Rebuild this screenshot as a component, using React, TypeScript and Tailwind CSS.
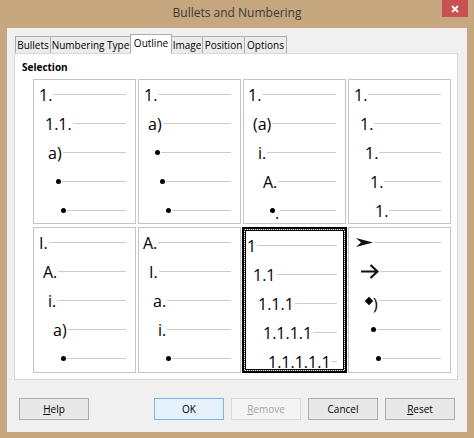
import React from 'react';

type Item = { pl: string; label: React.ReactNode };

const Dot = () => <span className="inline-block w-[5px] h-[5px] rounded-full bg-black" />;

const Arrowhead = () => (
  <svg width="17" height="9" viewBox="0 0 17 9" className="block">
    <path d="M0 0 L17 4.5 L0 9 L5 4.5 Z" fill="#111" />
  </svg>
);

const Arrow = () => (
  <svg width="19" height="15" viewBox="0 0 19 15" className="block">
    <path d="M1 7.5 H17.5 M10.5 1 L17.5 7.5 L10.5 14" stroke="#111" strokeWidth="2.2" fill="none" />
  </svg>
);

const Diamond = () => (
  <span className="flex items-center">
    <span className="inline-block w-[6px] h-[6px] rotate-45 bg-black" />
    <span className="ml-[1px] mt-[6px]">)</span>
  </span>
);

// preview cells, left to right, top to bottom
const cells: Item[][] = [
  [
    { pl: 'pl-[5px]', label: '1.' },
    { pl: 'pl-[11px]', label: '1.1.' },
    { pl: 'pl-[14px]', label: 'a)' },
    { pl: 'pl-[22px]', label: <Dot /> },
    { pl: 'pl-[27px]', label: <Dot /> },
  ],
  [
    { pl: 'pl-[5px]', label: '1.' },
    { pl: 'pl-[9px]', label: 'a)' },
    { pl: 'pl-[16px]', label: <Dot /> },
    { pl: 'pl-[21px]', label: <Dot /> },
    { pl: 'pl-[27px]', label: <Dot /> },
  ],
  [
    { pl: 'pl-[4px]', label: '1.' },
    { pl: 'pl-[9px]', label: '(a)' },
    { pl: 'pl-[14px]', label: 'i.' },
    { pl: 'pl-[19px]', label: 'A.' },
    {
      pl: 'pl-[26px]',
      label: (
        <span className="flex items-center">
          <Dot />
          <span className="mt-[4px]">.</span>
        </span>
      ),
    },
  ],
  [
    { pl: 'pl-[5px]', label: '1.' },
    { pl: 'pl-[11px]', label: '1.' },
    { pl: 'pl-[16px]', label: '1.' },
    { pl: 'pl-[21px]', label: '1.' },
    { pl: 'pl-[26px]', label: '1.' },
  ],
  [
    { pl: 'pl-[5px]', label: 'I.' },
    { pl: 'pl-[9px]', label: 'A.' },
    { pl: 'pl-[14px]', label: 'i.' },
    { pl: 'pl-[19px]', label: 'a)' },
    { pl: 'pl-[27px]', label: <Dot /> },
  ],
  [
    { pl: 'pl-[4px]', label: 'A.' },
    { pl: 'pl-[10px]', label: 'I.' },
    { pl: 'pl-[14px]', label: 'a.' },
    { pl: 'pl-[19px]', label: 'i.' },
    { pl: 'pl-[27px]', label: <Dot /> },
  ],
  [
    { pl: 'pl-[1px]', label: '1' },
    { pl: 'pl-[7px]', label: '1.1' },
    { pl: 'pl-[12px]', label: '1.1.1' },
    { pl: 'pl-[17px]', label: '1.1.1.1' },
    { pl: 'pl-[22px]', label: '1.1.1.1.1' },
  ],
  [
    { pl: 'pl-[7px]', label: <Arrowhead /> },
    { pl: 'pl-[11px]', label: <Arrow /> },
    { pl: 'pl-[17px]', label: <Diamond /> },
    { pl: 'pl-[22px]', label: <Dot /> },
    { pl: 'pl-[27px]', label: <Dot /> },
  ],
];

function Rows({ items, selected }: { items: Item[]; selected?: boolean }) {
  return (
    <div className={selected ? 'pr-[6px]' : 'pr-[9px]'}>
      {items.map((it, i) => (
        <div key={i} className={`flex items-center h-[29px] ${it.pl}`}>
          <span className="flex items-center text-[16px] leading-none text-black">{it.label}</span>
          <span className="flex-1 h-px bg-[#cccccc] ml-[1px]" />
        </div>
      ))}
    </div>
  );
}

function Button({ children, variant }: { children: React.ReactNode; variant?: 'default' | 'disabled' }) {
  const look =
    variant === 'default'
      ? 'bg-[#e5f1fb] border-[#7eb4ea] text-black'
      : variant === 'disabled'
        ? 'bg-[#f4f4f4] border-[#d9d9d9] text-[#a3a3a3]'
        : 'bg-[#e8e8e8] border-[#adadad] text-black';
  return (
    <div className={`w-[70px] h-[22px] border flex items-center justify-center text-[10px] ${look}`}>
      {children}
    </div>
  );
}

const tabs = [
  { name: 'Bullets', w: 'w-[36px]' },
  { name: 'Numbering Type', w: 'w-[81px]' },
  { name: 'Outline', w: 'w-[42px]', active: true },
  { name: 'Image', w: 'w-[32px]' },
  { name: 'Position', w: 'w-[43px]' },
  { name: 'Options', w: 'w-[43px]' },
];

export default function App() {
  return (
    <div className="w-[474px] h-[438px] bg-[#c7a780] flex flex-col font-['Open_Sans','Noto_Sans',sans-serif] overflow-hidden">
      {/* Title bar */}
      <div className="relative h-[28px] flex items-center justify-center">
        <span className="text-[12px] text-[#3a3a3a] -mt-[3px]">Bullets and Numbering</span>
        <div className="absolute right-[6px] top-0 w-[26px] h-[17px] bg-[#c75050] flex items-center justify-center">
          <svg width="8" height="8" viewBox="0 0 8 8">
            <path d="M1 1 L7 7 M7 1 L1 7" stroke="#fff" strokeWidth="1.8" />
          </svg>
        </div>
      </div>

      {/* Client area */}
      <div className="flex-1 mx-[7px] mb-[6px] bg-[#f0f0f0] flex flex-col">
        <div className="flex items-end pl-[8px] pt-[5px] h-[25px] relative z-10">
          {tabs.map((t, i) => (
            <div
              key={t.name}
              className={`${t.w} ${i > 0 ? '-ml-px' : ''} border border-[#acacac] flex items-center justify-center text-[10px] text-black ${
                t.active ? 'h-[20px] bg-white border-b-white relative z-10 -mb-px pb-[2px]' : 'h-[17px] bg-[#ececec] border-b-0'
              }`}
            >
              {t.name}
            </div>
          ))}
        </div>

        <div className="ml-[7px] mr-[9px] h-[327px] bg-white border border-[#d9d9d9]">
          <div className="mt-[6px] pl-[7px] h-[14px] flex items-center text-[10px] font-bold text-black">Selection</div>
          <div className="mt-[5px] ml-[18px] grid grid-cols-[103px_103px_103px_103px] grid-rows-[145px_146px] gap-x-[2px] gap-y-[3px]">
            {cells.map((c, i) =>
              i === 6 ? (
                <div key={i} className="border-2 border-black -mx-px">
                  <div className="h-full border border-dotted border-[#444]">
                    <div className="h-full border border-black">
                      <Rows items={c} selected />
                    </div>
                  </div>
                </div>
              ) : (
                <div key={i} className="border border-[#c4c4c4]">
                  <Rows items={c} />
                </div>
              ),
            )}
          </div>
        </div>

        <div className="mt-[18px] flex items-center px-[12px]">
          <Button>
            <span><u>H</u>elp</span>
          </Button>
          <div className="ml-auto flex gap-[7px]">
            <Button variant="default">OK</Button>
            <Button variant="disabled">
              <span><u>R</u>emove</span>
            </Button>
            <Button>Cancel</Button>
            <Button>
              <span><u>R</u>eset</span>
            </Button>
          </div>
        </div>
      </div>
    </div>
  );
}
